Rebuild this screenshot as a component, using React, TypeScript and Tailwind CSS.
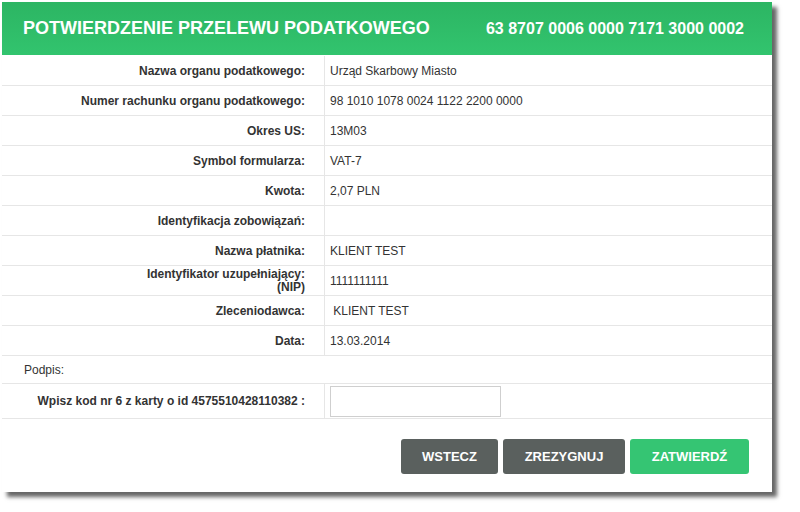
const rows: { label: React.ReactNode; value: string }[] = [
  { label: 'Nazwa organu podatkowego:', value: 'Urząd Skarbowy Miasto' },
  { label: 'Numer rachunku organu podatkowego:', value: '98 1010 1078 0024 1122 2200 0000' },
  { label: 'Okres US:', value: '13M03' },
  { label: 'Symbol formularza:', value: 'VAT-7' },
  { label: 'Kwota:', value: '2,07 PLN' },
  { label: 'Identyfikacja zobowiązań:', value: '' },
  { label: 'Nazwa płatnika:', value: 'KLIENT TEST' },
  {
    label: (
      <span className="block leading-[13px]">
        Identyfikator uzupełniający:
        <br />
        (NIP)
      </span>
    ),
    value: '1111111111',
  },
  { label: 'Zleceniodawca:', value: ' KLIENT TEST' },
  { label: 'Data:', value: '13.03.2014' },
]

const App = () => (
  <div className="h-[512px] w-[800px] bg-white pl-[2px] pt-[2px] font-['Liberation_Sans',Arial,sans-serif] text-[#333]">
    <div className="flex h-[490px] w-[770px] flex-col bg-white shadow-[5px_5px_4px_rgba(0,0,0,0.6)]">
      <div className="flex h-[53px] items-center justify-between bg-gradient-to-b from-[#2cb563] to-[#32c46e] pl-[21px] pr-[28px] font-bold text-white">
        <span className="text-[18px]">POTWIERDZENIE PRZELEWU PODATKOWEGO</span>
        <span className="text-[16px]">63 8707 0006 0000 7171 3000 0002</span>
      </div>
      <div className="flex flex-col pt-px text-[12px]">
        {rows.map((r, i) => (
          <div key={i} className="flex h-[30px] border-b border-[#e6e6e6]">
            <div className="flex w-[322px] items-center justify-end pr-[19px] text-right font-bold">{r.label}</div>
            <div className="flex flex-1 items-center whitespace-pre border-l border-[#e6e6e6] pl-[5px]">{r.value}</div>
          </div>
        ))}
        <div className="flex h-[28px] items-center border-b border-[#e6e6e6] pl-[22px]">Podpis:</div>
        <div className="flex h-[35px] border-b border-[#e6e6e6]">
          <div className="flex w-[322px] items-center justify-end pr-[19px] font-bold">Wpisz kod nr 6 z karty o id 4575510428110382 :</div>
          <div className="flex flex-1 items-center border-l border-[#e6e6e6] pl-[5px]">
            <input className="h-[31px] w-[171px] border border-[#cfcfcf] bg-white outline-none" />
          </div>
        </div>
      </div>
      <div className="flex justify-end gap-[5px] pr-[23px] pt-[20px] text-[13px] font-bold text-white">
        <button className="h-[35px] w-[97px] rounded-[3px] bg-[#5a605e]">WSTECZ</button>
        <button className="h-[35px] w-[122px] rounded-[3px] bg-[#5a605e]">ZREZYGNUJ</button>
        <button className="h-[35px] w-[119px] rounded-[3px] bg-[#35c573]">ZATWIERDŹ</button>
      </div>
    </div>
  </div>
)

export default App
